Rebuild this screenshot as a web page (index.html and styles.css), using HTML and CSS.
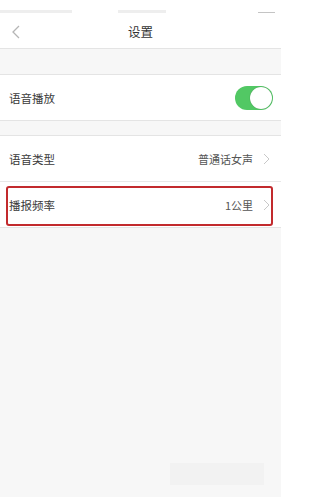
FILE: index.html
```html
<!DOCTYPE html>
<html lang="zh">
<head>
<meta charset="utf-8">
<link rel="stylesheet" href="styles.css">
</head>
<body>
<div class="screen">
  <div class="status">
    <span class="st st-left"></span>
    <span class="st st-mid"></span>
    <span class="st st-right"></span>
  </div>
  <div class="nav">
    <svg class="back" width="10" height="14" viewBox="0 0 10 14"><path d="M8 1 L2 7 L8 13" fill="none" stroke="#b5b5b5" stroke-width="1.3"/></svg>
    <div class="title">设置</div>
  </div>
  <div class="gap gap-lg"></div>
  <div class="group">
    <div class="row">
      <span class="label">语音播放</span>
      <span class="toggle"><span class="knob"></span></span>
    </div>
  </div>
  <div class="gap gap-sm"></div>
  <div class="group">
    <div class="row row-sep">
      <span class="label">语音类型</span>
      <span class="value">普通话女声</span>
      <svg class="chev" width="7" height="12" viewBox="0 0 7 12"><path d="M1 1 L6 6 L1 11" fill="none" stroke="#c8c8c8" stroke-width="1"/></svg>
    </div>
    <div class="row">
      <div class="highlight"></div>
      <span class="label">播报频率</span>
      <span class="value">1公里</span>
      <svg class="chev" width="7" height="12" viewBox="0 0 7 12"><path d="M1 1 L6 6 L1 11" fill="none" stroke="#c8c8c8" stroke-width="1"/></svg>
    </div>
  </div>
  <div class="rest">
    <div class="wm"></div>
  </div>
</div>
</body>
</html>
```

FILE: styles.css
```css
html, body {
  margin: 0;
  padding: 0;
  background: #ffffff;
  height: 100%;
}
body {
  font-family: "Noto Sans CJK SC", "Noto Sans", sans-serif;
  color: #333;
}
.screen {
  width: 281px;
  height: 497px;
  display: flex;
  flex-direction: column;
  background: #f7f7f7;
}
.status {
  height: 15px;
  background: #fff;
  position: relative;
}
.st {
  position: absolute;
  top: 10px;
  height: 3px;
  background: #eeeeee;
}
.st-left { left: 0; width: 72px; }
.st-mid { left: 118px; width: 48px; }
.st-right { left: 258px; width: 17px; height: 1px; top: 12px; background: #c4c4c4; }
.nav {
  height: 33px;
  background: #fff;
  border-bottom: 1px solid #e4e4e4;
  display: flex;
  align-items: center;
  justify-content: center;
  position: relative;
}
.back {
  position: absolute;
  left: 11px;
  top: 10px;
}
.title {
  font-size: 12.5px;
  color: #333;
}
.gap { background: #f7f7f7; }
.gap-lg { height: 25px; }
.gap-sm { height: 14px; }
.group {
  background: #fff;
  border-top: 1px solid #e4e4e4;
  border-bottom: 1px solid #e4e4e4;
}
.row {
  height: 45px;
  display: flex;
  align-items: center;
  padding: 0 9px;
  position: relative;
}
.row-sep {
  border-bottom: 1px solid #e8e8e8;
}
.label {
  font-size: 11.5px;
  color: #3a3a3a;
  flex: 1;
}
.value {
  font-size: 11px;
  color: #555;
  margin-right: 10px;
}
.chev {
  margin-right: 2px;
}
.toggle {
  width: 38px;
  height: 24px;
  border-radius: 12px;
  background: #52c864;
  position: relative;
  margin-right: -1px;
}
.knob {
  position: absolute;
  right: 1px;
  top: 1px;
  width: 22px;
  height: 22px;
  border-radius: 50%;
  background: #fff;
  box-shadow: 0 0 1px rgba(0,0,0,0.4);
}
.highlight {
  position: absolute;
  left: 6px;
  right: 8px;
  top: 4px;
  bottom: 1px;
  border: 2.5px solid #c22a2d;
  border-radius: 3px;
}
.rest {
  flex: 1;
  position: relative;
}
.wm {
  position: absolute;
  left: 170px;
  top: 235px;
  width: 94px;
  height: 22px;
  background: #eeeeee;
  opacity: 0.6;
}
```
